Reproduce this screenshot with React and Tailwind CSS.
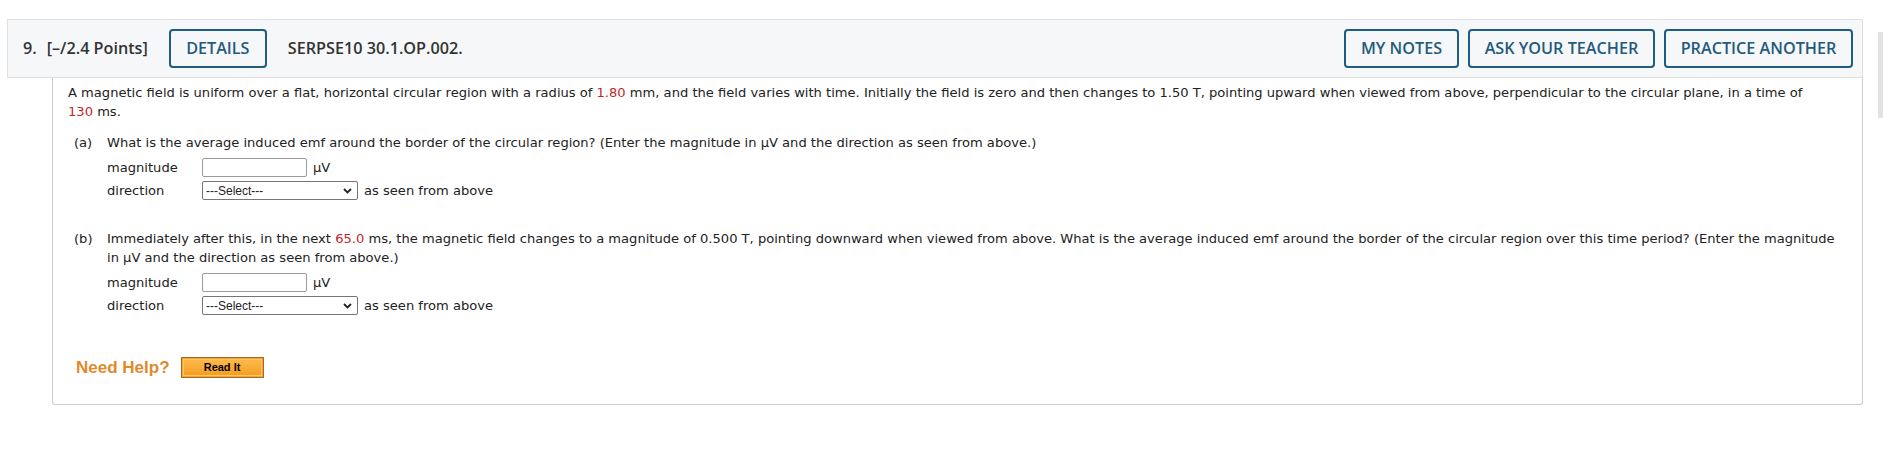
import React from "react";

const red = "text-[#c0272d]";

function Input() {
  return <div className="w-[105px] h-[19px] border border-[#9a9a9a] rounded-[2px] bg-white" />;
}

function Select() {
  return (
    <div className="w-[156px] h-[19px] border border-[#767676] rounded-[2px] bg-white flex items-center justify-between pl-[3px] pr-[5px]">
      <span className="text-[12px] leading-none text-[#222]" style={{ fontFamily: '"Liberation Sans", Arial, sans-serif' }}>---Select---</span>
      <svg width="9" height="6" viewBox="0 0 9 6">
        <path d="M1 1 L4.5 4.5 L8 1" fill="none" stroke="#222" strokeWidth="1.8" />
      </svg>
    </div>
  );
}

function Rows() {
  return (
    <div className="flex flex-col">
      <div className="flex items-center h-[23px]">
        <span className="w-[95px]">magnitude</span>
        <Input />
        <span className="ml-[6px]">μV</span>
      </div>
      <div className="flex items-center h-[23px]">
        <span className="w-[95px]">direction</span>
        <Select />
        <span className="ml-[6px]">as seen from above</span>
      </div>
    </div>
  );
}

function OutlineBtn({ children, w }) {
  return (
    <div
      className={`h-[39px] border-2 border-[#1f5c80] rounded-[4px] flex items-center justify-center text-[16.2px] font-semibold text-[#245a7d] ${w}`}
    >
      {children}
    </div>
  );
}

export default function App() {
  return (
    <div className="w-[1883px] h-[454px] bg-white flex">
      <div className="w-[1863px] pl-[7px] pt-[19px]">
        <div
          className="h-[59px] border border-[#e0e0e0] bg-[#f6f7f8] flex items-center pl-[15px] pr-[9px] text-[#333]"
          style={{ fontFamily: '"Open Sans", sans-serif' }}
        >
          <span className="text-[16.2px] font-semibold">9.</span>
          <span className="text-[16.2px] font-semibold ml-[10px]">[–/2.4 Points]</span>
          <div className="ml-[21px]">
            <OutlineBtn w="w-[98px]">DETAILS</OutlineBtn>
          </div>
          <span className="ml-[21px] text-[16.2px] font-semibold">SERPSE10 30.1.OP.002.</span>
          <div className="ml-auto flex gap-[9px]">
            <OutlineBtn w="w-[115px]">MY NOTES</OutlineBtn>
            <OutlineBtn w="w-[187px]">ASK YOUR TEACHER</OutlineBtn>
            <OutlineBtn w="w-[189px]">PRACTICE ANOTHER</OutlineBtn>
          </div>
        </div>
        <div
          className="ml-[45px] h-[327px] border-l border-r border-b border-[#cdcdcd] rounded-b-[3px] pl-[15px] pt-[5px] text-[13.08px] leading-[19px] text-[#222] whitespace-nowrap"
          style={{ fontFamily: '"DejaVu Sans", Verdana, sans-serif' }}
        >
          <p>
            A magnetic field is uniform over a flat, horizontal circular region with a radius of <span className={red}>1.80</span> mm, and the field varies with time. Initially the field is zero and then changes to 1.50 T, pointing upward when viewed from above, perpendicular to the circular plane, in a time of
            <br />
            <span className={red}>130</span> ms.
          </p>
          <div className="flex mt-[12px] pl-[6px]">
            <span className="w-[33px]">(a)</span>
            <div>
              <p>What is the average induced emf around the border of the circular region? (Enter the magnitude in μV and the direction as seen from above.)</p>
              <div className="mt-[4px]">
                <Rows />
              </div>
            </div>
          </div>
          <div className="flex mt-[27px] pl-[6px]">
            <span className="w-[33px]">(b)</span>
            <div>
              <p>
                Immediately after this, in the next <span className={red}>65.0</span> ms, the magnetic field changes to a magnitude of 0.500 T, pointing downward when viewed from above. What is the average induced emf around the border of the circular region over this time period? (Enter the magnitude
                <br />
                in μV and the direction as seen from above.)
              </p>
              <div className="mt-[4px]">
                <Rows />
              </div>
            </div>
          </div>
          <div className="flex items-center mt-[40px] pl-[8px]" style={{ fontFamily: '"Liberation Sans", Arial, sans-serif' }}>
            <span className="text-[17px] font-bold text-[#df8a2c] leading-none">Need Help?</span>
            <div className="ml-[11px] w-[83px] h-[21px] border border-[#a9691f] bg-[#f6a12c] p-[1px]">
              <div className="w-full h-full border border-[#fcc66a] bg-gradient-to-b from-[#fcb949] to-[#f59e20] flex items-center justify-center text-[11px] font-bold text-black leading-none">
                Read It
              </div>
            </div>
          </div>
        </div>
      </div>
      <div className="flex-1 flex justify-end pt-[32px]">
        <div className="w-[5px] h-[86px] bg-[#e2e2e2]" />
      </div>
    </div>
  );
}
